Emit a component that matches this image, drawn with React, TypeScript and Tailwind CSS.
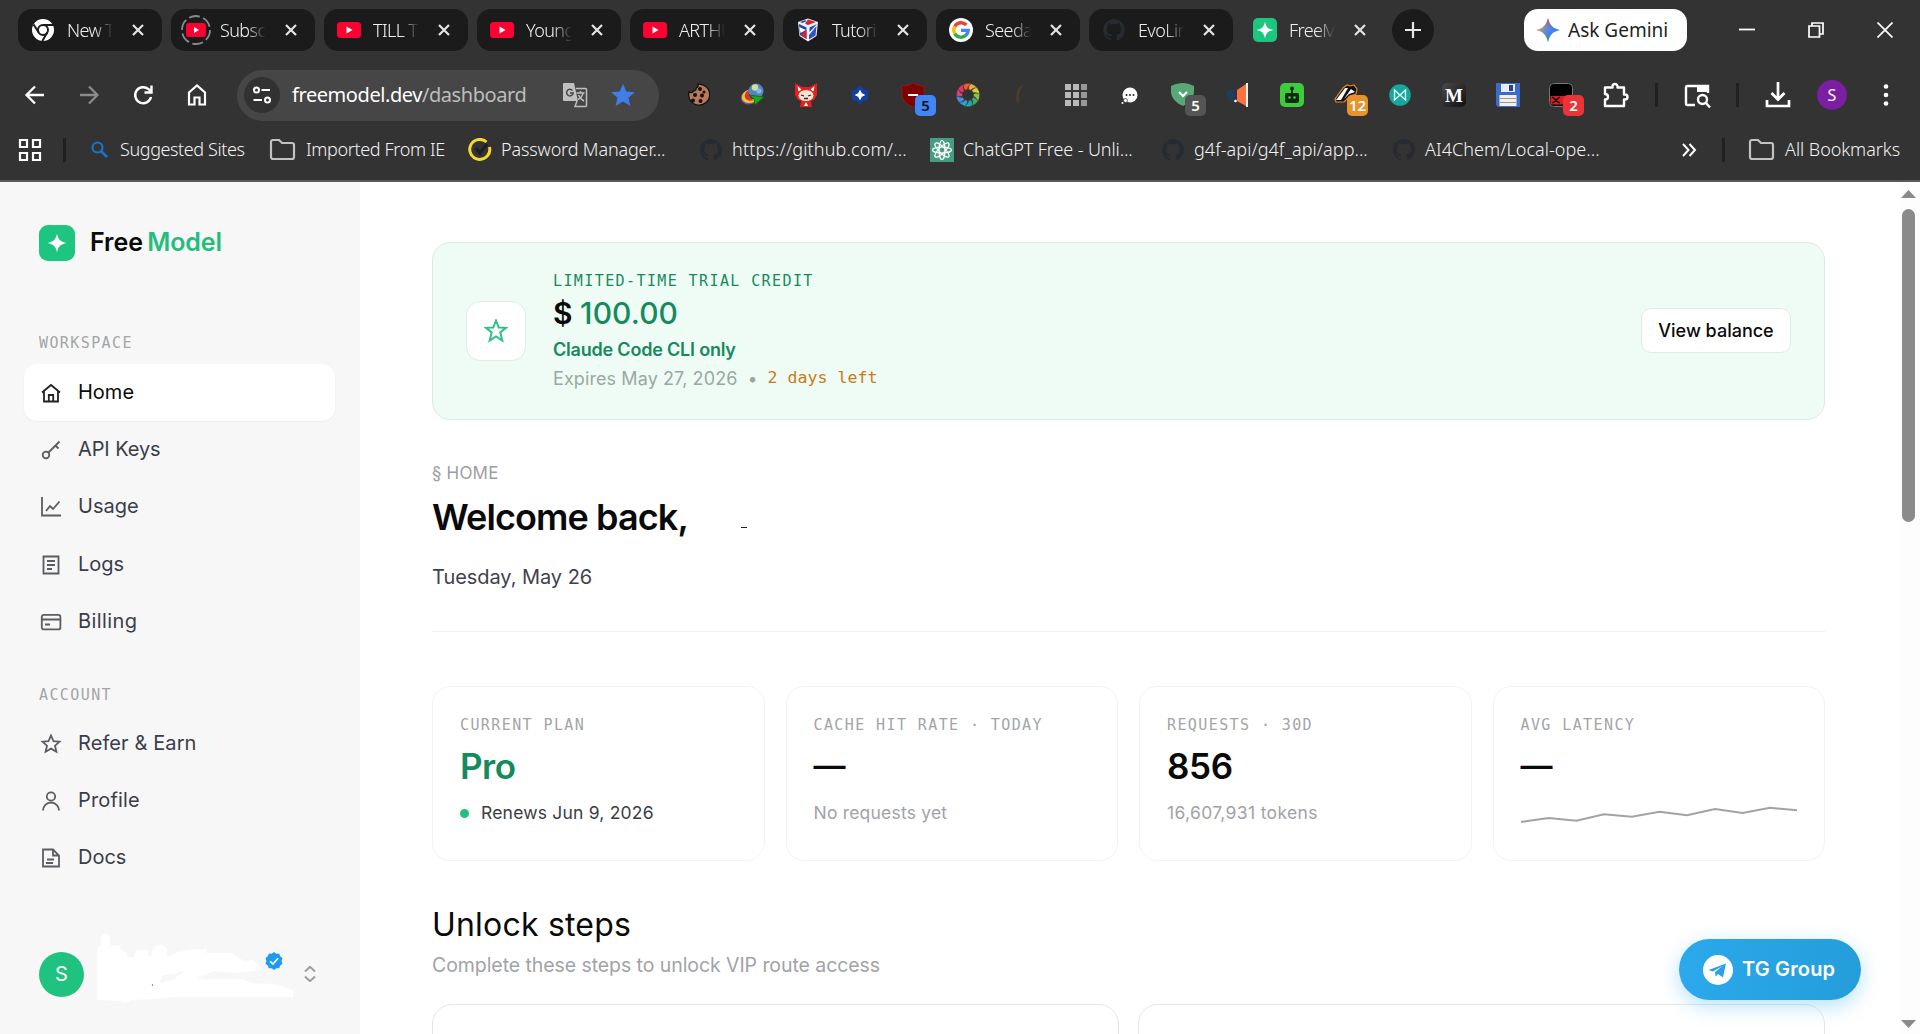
import React from "react";

type P = { children?: React.ReactNode };

const CH = "font-['Noto_Sans','Open_Sans',sans-serif]";

function Svg({ s = 24, vb = "0 0 24 24", children, className = "" }: P & { s?: number; vb?: string; className?: string }) {
  return (
    <svg width={s} height={s} viewBox={vb} fill="none" stroke="currentColor" strokeWidth={1.8} className={"shrink-0 " + className}>
      {children}
    </svg>
  );
}

const YT = () => (
  <Svg className="text-white">
    <rect x="0" y="4" width="24" height="16" rx="3.5" fill="#ff0033" stroke="none" />
    <path d="M9.5 8.5v7l6-3.5z" fill="#fff" stroke="none" />
  </Svg>
);
const YTLoading = () => (
  <Svg s={32} vb="0 0 32 32" className="-m-1 text-[#8a8a8a]">
    <circle cx="16" cy="16" r="14" strokeDasharray="11 3.6" strokeWidth="1.8" />
    <rect x="6" y="9" width="20" height="14" rx="3" fill="#ff0033" stroke="none" />
    <path d="M14 13v6l5-3z" fill="#fff" stroke="none" />
  </Svg>
);
const ChromeIcon = () => (
  <Svg className="text-[#1b1b1b]">
    <circle cx="12" cy="12" r="11" fill="#fff" stroke="none" />
    <circle cx="12" cy="12" r="5" strokeWidth="2" />
    <path d="M12 7h10M7.700 14.500L2.600 6.500M16.300 14.500l-5 8.400" strokeWidth="2" />
  </Svg>
);
const CubeIcon = () => (
  <Svg>
    <path d="M12 .5L22 4l-1.500 14L12 23.500 3.500 18 2 4z" fill="#f2f2f5" stroke="none" />
    <path d="M3 6l7.500 3.500V21L4 17z" fill="#1d46b8" stroke="none" />
    <path d="M3.300 9l6.500 3-5.300 3z" fill="#fff" stroke="none" />
    <path d="M4.500 17l6-5v9z" fill="#d8242f" stroke="none" />
    <path d="M21 6l-7.500 3.500V14z" fill="#1d46b8" stroke="none" />
    <path d="M20.500 8L13 17v4.500l6.500-4z" fill="#2b55c4" stroke="none" />
    <path d="M12 1.500l8 2.500-8 3-3-1.200z" fill="#d8242f" stroke="none" />
    <path d="M4 4l5-1.700 2 .7-4.500 2z" fill="#1d46b8" stroke="none" />
  </Svg>
);
const GoogleIcon = () => (
  <Svg>
    <circle cx="12" cy="12" r="12" fill="#fff" stroke="none" />
    <g strokeWidth="3.4">
      <path d="M17.300 7A7.200 7.200 0 0 0 5.800 8.400" stroke="#ea4335" />
      <path d="M5.800 8.400a7.200 7.200 0 0 0 0 7.200" stroke="#fbbc05" />
      <path d="M5.800 15.600a7.200 7.200 0 0 0 11.100 1.700" stroke="#34a853" />
      <path d="M16.800 17.400a7.200 7.200 0 0 0 2.400-5H12" stroke="#4285f4" />
    </g>
  </Svg>
);
const GitHub = () => (
  <Svg className="text-[#252b31]">
    <path d="M12 1a11 11 0 0 0-3.5 21.4c.6.1.8-.2.8-.5v-2c-3 .6-3.800-1.400-3.800-1.400-.5-1.300-1.200-1.600-1.200-1.600-1-.7.100-.7.100-.7 1.100.1 1.700 1.100 1.700 1.100 1 1.700 2.600 1.200 3.200.9.100-.7.400-1.200.7-1.500-2.500-.3-5-1.200-5-5.500 0-1.200.4-2.200 1.100-2.900-.1-.3-.5-1.400.1-3 0 0 1-.3 3 1.100a10.500 10.500 0 0 1 5.600 0c2.100-1.400 3-1.100 3-1.100.6 1.600.2 2.700.1 3 .7.700 1.100 1.700 1.100 2.900 0 4.300-2.600 5.200-5.100 5.500.4.300.8 1 .8 2v3.200c0 .3.200.6.800.5A11 11 0 0 0 12 1z" fill="currentColor" stroke="none" />
  </Svg>
);
const SparkTile = () => (
  <Svg>
    <rect width="24" height="24" rx="5" fill="#1dc580" stroke="none" />
    <path d="M12 3.500c1 5.500 3 7.500 8.500 8.500-5.500 1-7.500 3-8.500 8.500-1-5.500-3-7.500-8.500-8.500 5.500-1 7.500-3 8.500-8.500z" fill="#fff" stroke="none" />
  </Svg>
);
const Close = () => (
  <Svg s={14} vb="0 0 14 14" className="text-[#e4e4e4]">
    <path d="M2 2l10 10M12 2L2 12" strokeWidth="2.200" />
  </Svg>
);
const Folder = () => (
  <Svg s={27} vb="0 0 27 24" className="text-[#c2c2c2]">
    <path d="M2 4.500a2 2 0 0 1 2-2h6l3 3h10a2 2 0 0 1 2 2v12a2 2 0 0 1-2 2H4a2 2 0 0 1-2-2z" strokeWidth="2.200" />
  </Svg>
);

const tabs: { t: string; i: React.ReactNode }[] = [
  { t: "New Tab", i: <ChromeIcon /> },
  { t: "Subscriptions", i: <YTLoading /> },
  { t: "TILL THE", i: <YT /> },
  { t: "Young and", i: <YT /> },
  { t: "ARTHUR", i: <YT /> },
  { t: "Tutorials", i: <CubeIcon /> },
  { t: "Seedance", i: <GoogleIcon /> },
  { t: "EvoLink", i: <GitHub /> },
  { t: "FreeModel", i: <SparkTile /> },
];

function TabStrip() {
  return (
    <div className="flex h-[60px] items-center pl-[18px]">
      <div className="flex gap-[9px]">
        {tabs.map(({ t, i }, n) => (
          <div key={t} className={"flex h-[42px] w-[144px] items-center rounded-[14px] pl-[13px] " + (n < 8 ? "bg-[#1b1b1b]" : "-ml-[2px]")}>
            {i}
            <span className="ml-3 w-[46px] overflow-hidden whitespace-nowrap text-[18px] font-light tracking-[-0.6px] text-[#f0f0f0] [mask-image:linear-gradient(to_right,#000_60%,transparent)]">{t}</span>
            <span className="ml-[18px] flex"><Close /></span>
          </div>
        ))}
      </div>
      <div className="ml-[8px] flex size-[42px] items-center justify-center rounded-full bg-[#1b1b1b] text-[#e8e8e8]">
        <Svg s={18} vb="0 0 18 18"><path d="M9 1v16M1 9h16" strokeWidth="2.200" /></Svg>
      </div>
      <div className="ml-[90px] flex h-[42px] w-[163px] items-center rounded-[14px] bg-white pl-3 text-[#1f1f1f]">
        <svg width="24" height="24" viewBox="0 0 24 24" className="shrink-0">
          <defs>
            <linearGradient id="gem" x1="0" y1="0.300" x2="1" y2="0.600">
              <stop offset="0" stopColor="#f2b90f" /><stop offset="0.350" stopColor="#7f8fb8" /><stop offset="0.600" stopColor="#4285f4" /><stop offset="1" stopColor="#3279f9" />
            </linearGradient>
            <linearGradient id="gem2" x1="0" y1="0" x2="0" y2="1">
              <stop offset="0" stopColor="#ea4335" /><stop offset="0.400" stopColor="#ea4335" stopOpacity="0" /><stop offset="0.650" stopColor="#34a853" stopOpacity="0" /><stop offset="1" stopColor="#34a853" />
            </linearGradient>
          </defs>
          <path d="M12 0c1.500 7 5 10.500 12 12-7 1.500-10.500 5-12 12-1.500-7-5-10.500-12-12C7 10.500 10.500 7 12 0z" fill="url(#gem)" />
          <path d="M12 0c1.500 7 5 10.500 12 12-7 1.500-10.500 5-12 12-1.500-7-5-10.500-12-12C7 10.500 10.500 7 12 0z" fill="url(#gem2)" />
        </svg>
        <span className="ml-2 whitespace-nowrap text-[19px] tracking-[0px]">Ask Gemini</span>
      </div>
      <div className="ml-[52px] flex items-center gap-[53px] text-white">
        <Svg s={16} vb="0 0 16 16"><path d="M0 7.500h16" /></Svg>
        <Svg s={16} vb="0 0 16 16"><path d="M1 4h10.500v11H1zM4 4V1h11v11h-3.500" strokeWidth="1.700" /></Svg>
        <Svg s={16} vb="0 0 16 16"><path d="M.5.5l15 15M15.500.5l-15 15" strokeWidth="1.700" /></Svg>
      </div>
    </div>
  );
}

function Ext({ children, badge, color = "" }: P & { badge?: string; color?: string }) {
  return (
    <div className="relative flex h-8 w-[54px] items-center justify-center">
      {children}
      {badge && <span className={"absolute left-[28px] top-[16px] flex h-[21px] w-[21px] items-center justify-center rounded-[5px] text-[15px] font-semibold " + color}>{badge}</span>}
    </div>
  );
}

const wheel = ["#ef5a3c", "#f2a93b", "#d9cf3f", "#8bc34a", "#3fae6a", "#26a6a8", "#29a0dc", "#4a8fe0", "#d8407f", "#e8365a"];

function Toolbar() {
  return (
    <div className="flex h-[70px] items-center text-white">
      <div className="flex w-[237px] pl-2">
        <div className="flex w-[54px] justify-center"><Svg><path d="M21 12H4M12 3.500L3.500 12l8.500 8.500" strokeWidth="2.300" /></Svg></div>
        <div className="flex w-[54px] justify-center text-[#8b8b8b]"><Svg><path d="M3 12h17M12 3.500l8.500 8.500-8.500 8.500" strokeWidth="2.300" /></Svg></div>
        <div className="flex w-[54px] justify-center"><Svg><path d="M20 14a8 8 0 1 1-2.500-7.800L20 8.500M20.500 2.500v7h-7" strokeWidth="2.400" /></Svg></div>
        <div className="flex w-[54px] justify-center"><Svg><path d="M4 9.500L12 2.500l8 7v12h-5.500v-7h-5v7H4z" strokeWidth="2.200" /></Svg></div>
      </div>
      <div className="flex h-[51px] w-[422px] items-center rounded-full bg-[#464646] pl-[7px]">
        <div className="flex size-9 items-center justify-center rounded-full bg-[#323232]">
          <Svg s={20} vb="0 0 20 20"><circle cx="4.500" cy="5" r="2.500" strokeWidth="2" /><path d="M9.500 5H18M1.500 15H10" strokeWidth="2" /><circle cx="15.500" cy="15" r="2.500" strokeWidth="2" /></Svg>
        </div>
        <span className="ml-3 w-[236px] whitespace-nowrap text-[20px] tracking-[-0.430px]">freemodel.dev<span className="text-[#bdbdbd]">/dashboard</span></span>
        <Svg s={26} vb="0 0 26 26" className="ml-[34px] text-[#c0c0c0]">
          <path d="M2 1h10l4 18H2a1 1 0 0 1-1-1V2a1 1 0 0 1 1-1z" fill="currentColor" stroke="none" />
          <path d="M10.500 8.500a3.300 3.300 0 1 0 .7 2.500H8" stroke="#464646" strokeWidth="1.500" />
          <path d="M14 6.500h9.500a1 1 0 0 1 1 1v16a1 1 0 0 1-1 1H13l2-5.500M14.500 11h8M18.500 9v2M21 11c-.5 3-3 5.500-5 6.500M16.500 13c1 2.500 3 4.500 5.500 6" strokeWidth="1.500" />
        </Svg>
        <Svg s={26} vb="0 0 24 24" className="ml-[22px]"><path d="M12 1.500l3.100 7.200 7.900.7-6 5.100 1.900 7.700L12 18.100l-6.900 4.100L7 14.500 1 9.400l7.900-.7z" fill="#3f7de8" stroke="none" /></Svg>
      </div>
      <div className="ml-[12px] flex">
        <Ext><Svg><path d="M12 1.200c.6 1.500-.3 3.300-1.800 3.800.3 1.700-1 3-2.700 3-.5 1.500-3 2.300-4.500 1A10.500 10.500 0 1 0 12 1.200z" fill="#b9785a" stroke="#111" strokeWidth="1.300" /><g fill="#111" stroke="none"><circle cx="14" cy="6" r="2" /><circle cx="18" cy="9" r="1.500" /><circle cx="9" cy="12" r="2" /><circle cx="16" cy="12.500" r="2" /><circle cx="14.500" cy="18" r="2" /><circle cx="7" cy="17.500" r="2" /></g></Svg></Ext>
        <Ext><Svg><path d="M11 6C4 7 0 12 1 16c1 5 7 7 13 4l1-4C9 17 7 12 11 6z" fill="#7a4bb0" stroke="none" /><path d="M11 6C5 7 1 12 2 15.500c1 4 7 6 12 3.500l1-3C9 17 7 12 11 6z" fill="#e9c92b" stroke="none" /><path d="M11 6C7 7 4 11 5 14.500c1 3 5 4 9 2.500-5-1-6-6-3-11z" fill="#d7342a" stroke="none" /><circle cx="16" cy="8" r="7.500" fill="#4f86c4" stroke="none" /><circle cx="15" cy="4.500" r="3.200" fill="#d4dd9b" stroke="none" /><circle cx="19" cy="8" r="2.500" fill="#8fb7e2" stroke="none" /><path d="M9 12l15 2-9 8-1-6z" fill="#1fa321" stroke="#126012" strokeWidth=".7" /></Svg></Ext>
        <Ext><Svg><path d="M1 0l7 4h8l7-4v12l-3 5-3 1 1 6H6l1-6-3-1-3-5z" fill="#e3201b" stroke="none" /><path d="M3.500 3l4 3.500-3 2zM20.500 3l-4 3.500 3 2z" fill="#fff" stroke="none" /><ellipse cx="12" cy="12.500" rx="7.500" ry="5.500" fill="#fbe4d4" stroke="none" /><path d="M7 12l3 1M17 12l-3 1M10 15.500h4" stroke="#37201b" strokeWidth="1.300" /><path d="M12 19l2 4h-4z" fill="#fff" stroke="none" /></Svg></Ext>
        <Ext><Svg><path d="M12 2.500l3.500 3 4.500 1.500.5 5-1 5-4.500 1.500-3 3-3-3L4.500 17l-1-5 .5-5 4.500-1.500z" fill="#173f9c" stroke="none" /><path d="M12 7.500l1.500 3 3 1.500-3 1.500-1.500 3-1.500-3-3-1.500 3-1.500z" fill="#fff" stroke="#fff" strokeWidth="1" /></Svg></Ext>
        <Ext badge="5" color="bg-[#4285f4] text-[#10131a]"><Svg className="-translate-x-[1px]"><path d="M12 0c3 2 7 3 11 3v8c0 6-5 11-11 13C6 22 1 17 1 11V3c4 0 8-1 11-3z" fill="#7f0000" stroke="#a31b1b" strokeWidth=".7" /><path d="M7 12h10" stroke="#fff" strokeWidth="2" /></Svg></Ext>
        <Ext><Svg>{wheel.map((c, k) => <path key={c} d="M8 1A11.500 11.500 0 0 1 16 1c-3 1-4.500 3-4.500 5.500L9 7C7.500 5 7 3 8 1z" fill={c} stroke="#333" strokeWidth=".4" transform={`rotate(${k * 36} 12 12)`} />)}</Svg></Ext>
        <Ext><Svg><path d="M14 1.500C5 4 4 17 9 21c1-1-2-13 5-19.500z" fill="#4b3d28" stroke="none" /></Svg></Ext>
        <Ext><Svg>{[1, 9, 17].map((x) => [1, 9, 17].map((y) => <rect key={x + "-" + y} x={x} y={y} width="6" height="6" fill={x > 9 ? "#989898" : "#b9b9b9"} stroke="none" />))}</Svg></Ext>
        <Ext><Svg><circle cx="12" cy="12" r="7.500" fill="#fff" stroke="none" /><circle cx="7.500" cy="17.500" r="2" fill="#fff" stroke="#333" strokeWidth=".7" /><circle cx="4.500" cy="20" r="1" fill="#fff" stroke="none" /><g fill="#222" stroke="none"><circle cx="8.500" cy="12" r="1" /><circle cx="12" cy="12" r="1" /><circle cx="15.500" cy="12" r="1" /></g></Svg></Ext>
        <Ext badge="5" color="bg-[#555] text-white"><Svg className="-translate-x-[1px]"><path d="M12 0c3 0 7 1 11 3v5c0 7-5 12-11 15C5 20 0 15 0 8V3c4-2 8-3 12-3z" fill="#58a877" stroke="none" /><path d="M8 9l4 4 4-4" stroke="#fff" strokeWidth="2" /></Svg></Ext>
        <Ext><Svg><path d="M0 9c2-2 6-3 9-3v12c-2 1-4 0-5-1-3-1-4-5-4-8z" fill="#1d3d5c" stroke="none" /><path d="M11 7l9-6v22l-9-5z" fill="#ff7043" stroke="none" /><path d="M21 0v24" stroke="#eee" strokeWidth="2" /><circle cx="9.500" cy="18" r="1.300" fill="#fff" stroke="none" /></Svg></Ext>
        <Ext><Svg><rect width="24" height="24" rx="5" fill="#3ecb3c" stroke="none" /><rect x="5" y="10" width="14" height="10" rx="2" fill="#0d2b0d" stroke="none" /><circle cx="12" cy="5.500" r="2" fill="#0d2b0d" stroke="none" /><path d="M12 5v5" stroke="#0d2b0d" /><circle cx="9.500" cy="14.500" r="1.300" fill="#3ecb3c" stroke="none" /><circle cx="14.500" cy="14.500" r="1.300" fill="#3ecb3c" stroke="none" /></Svg></Ext>
        <Ext badge="12" color="bg-[#e8912d] text-white"><Svg><path d="M1 16L9 5l4-3 3 1 4-1 3 4-1 5-6 2-6 6H2z" fill="#111" stroke="#e58a2b" strokeWidth="1.200" /><path d="M2 17L11 5l3 0L7 17zM17 6l4 3-6 2-5 5z" fill="#fff" stroke="none" /></Svg></Ext>
        <Ext><Svg><circle cx="12" cy="12" r="10.800" fill="#18a79b" stroke="none" /><path d="M6.500 17V7l5.500 5 5.500-5v10L12 12z" stroke="#d8fffa" strokeWidth="1.400" /></Svg></Ext>
        <Ext><div className="flex size-6 items-center justify-center rounded-[5px] bg-gradient-to-br from-[#4a4a4a] to-[#111] font-['Liberation_Serif',serif] text-[19px] font-bold leading-none">M</div></Ext>
        <Ext><Svg><path d="M0 0h24v24H2l-2-2z" fill="#3b6cc9" stroke="none" /><rect x="5" y="1" width="14" height="8" fill="#e5ecfa" stroke="none" /><rect x="13" y="2" width="4" height="6" fill="#24468c" stroke="none" /><rect x="3.500" y="12" width="17" height="11" fill="#f3f1ec" stroke="none" /><path d="M4 15.500h16M4 19.500h16" stroke="#999" strokeWidth="1.200" /></Svg></Ext>
        <Ext badge="2" color="bg-[#ee3338] text-white"><Svg className="-translate-x-[1px]"><rect x=".5" y=".5" width="23" height="23" rx="4" fill="#000" stroke="#777" strokeWidth="1" /><path d="M1.500 13h20v8.500h-20z" fill="#d61f26" stroke="none" /><path d="M3 14l4 3 4-3M3 20l4-2 4 2" stroke="#000" strokeWidth="1.200" /></Svg></Ext>
        <Ext><Svg s={28} vb="0 0 28 28"><path d="M3 6.500h7.500v-1a2.500 2.500 0 0 1 5 0v1H22v7h1a2.500 2.500 0 0 1 0 5h-1V25H3v-6.500c4 0 4-5.500 0-5.500z" strokeWidth="2.400" strokeLinejoin="round" /></Svg></Ext>
      </div>
      <div className="ml-[12px] h-[24px] w-[3px] bg-[#202020]" />
      <Svg s={27} vb="0 0 27 27" className="ml-[26px]"><path d="M11 23H3.500A1.500 1.500 0 0 1 2 21.500v-16A1.500 1.500 0 0 1 3.500 4H24v7" strokeWidth="2.400" /><path d="M13 3.500h11.500V10H13z" fill="currentColor" stroke="none" /><circle cx="18.500" cy="17.500" r="4.500" strokeWidth="2.400" /><path d="M22 21l4 4.500" strokeWidth="2.400" /></Svg>
      <div className="ml-[25px] h-[24px] w-[3px] bg-[#202020]" />
      <Svg s={26} vb="0 0 26 26" className="ml-[26px]"><path d="M13 0v17M6.500 11l6.500 6.500 6.500-6.500M2 18v6h22v-6" strokeWidth="2.700" /></Svg>
      <div className="ml-[26px] flex size-[30px] items-center justify-center rounded-full bg-[#7b1fa2] text-[16px]">S</div>
      <Svg s={24} className="ml-[27px]"><g fill="currentColor" stroke="none"><circle cx="12" cy="3.500" r="2.300" /><circle cx="12" cy="12" r="2.300" /><circle cx="12" cy="20.500" r="2.300" /></g></Svg>
    </div>
  );
}

function Bm({ icon, label, w, track }: { icon: React.ReactNode; label: string; w: string; track: string }) {
  return (
    <div className={"flex shrink-0 items-center whitespace-nowrap " + w}>
      {icon}
      <span className={"ml-[9px] " + track}>{label}</span>
    </div>
  );
}

function Bookmarks() {
  return (
    <div className="flex h-[39px] items-center pl-[18px] text-[18px] font-light text-[#f2f2f2]">
      <Svg className="text-white"><path d="M2 2h7v7H2zM15 2h7v7h-7zM2 15h7v7H2zM15 15h7v7h-7z" strokeWidth="2.200" /></Svg>
      <div className="ml-[21px] h-[24px] w-[3px] bg-[#202020]" />
      <div className="w-[25px]" />
      <Bm w="w-[178px]" track="pl-[3px] tracking-[-0.4px]" label="Suggested Sites" icon={<Svg s={17} vb="0 0 17 17" className="text-[#1a73c8]"><circle cx="6.500" cy="6.500" r="5" strokeWidth="2.200" /><path d="M10 10l6 6" strokeWidth="2.600" /></Svg>} />
      <Bm w="w-[199px]" track="pl-px tracking-[-0.350px]" label="Imported From IE" icon={<Folder />} />
      <Bm w="w-[231px]" track="tracking-[-0.150px]" label="Password Manager..." icon={<Svg className="text-[#f7d92c]"><path d="M18.500 4a10 10 0 1 0 3 5" strokeWidth="3" /><path d="M8 10l4 5 7-9" stroke="#1e1e1e" strokeWidth="3" /></Svg>} />
      <Bm w="w-[231px]" track="tracking-[0.150px]" label="https://github.com/..." icon={<GitHub />} />
      <Bm w="w-[231px]" track="tracking-[-0.1px]" label="ChatGPT Free - Unli..." icon={<Svg><rect width="24" height="24" fill="#479d83" stroke="none" />{[0, 45, 90, 135].map((a) => <ellipse key={a} cx="12" cy="12" rx="3" ry="9.500" stroke="#fff" strokeWidth="1.200" transform={`rotate(${a} 12 12)`} />)}</Svg>} />
      <Bm w="w-[231px]" track="tracking-[0.050px]" label="g4f-api/g4f_api/app..." icon={<GitHub />} />
      <Bm w="w-[289px]" track="tracking-[0.050px]" label="AI4Chem/Local-ope..." icon={<GitHub />} />
      <Svg s={16} vb="0 0 16 16" className="text-white"><path d="M2 2l5.500 6L2 14M8.500 2L14 8l-5.500 6" strokeWidth="2" /></Svg>
      <div className="ml-[25px] h-[24px] w-[3px] bg-[#202020]" />
      <div className="w-[23px]" />
      <Bm w="w-[160px]" track="pl-px tracking-[-0.050px]" label="All Bookmarks" icon={<Folder />} />
    </div>
  );
}

const navIcons: Record<string, React.ReactNode> = {
  Home: <path d="M1 9.500L10 2l9 7.500M3 8.500V18.500h14V8.500M7.800 18.500v-6.500h4.400v6.500" />,
  "API Keys": <><circle cx="5" cy="15" r="3.300" /><path d="M7.500 12.500L18.500 1.500M14.500 5.500l3 3" /></>,
  Usage: <path d="M1 0v18.500h19M5 14l4-5 3 3 6.500-7.500" />,
  Logs: <path d="M2.500 1.500h15v17h-15zM6 6h8M6 10h8M6 14h5" />,
  Billing: <><rect x="0.800" y="2.800" width="18.600" height="14.600" rx="2" /><path d="M1 7.500h18M4 12.500h5" /></>,
  "Refer & Earn": <path d="M10 1.500l2.500 5.600 6 .6-4.500 4 1.400 6L10 14.600l-5.400 3.100 1.400-6-4.500-4 6-.6z" />,
  Profile: <><circle cx="10" cy="5.500" r="4.200" /><path d="M2 19.500a8 8 0 0 1 16 0" /></>,
  Docs: <path d="M2 1.500h10l6 6v11H2zM12 1.500v6h6M6 11.500h7M5 15h7" />,
};

function NavItem({ name, active, track = "tracking-[0px]" }: { name: string; active?: boolean; track?: string }) {
  return (
    <div className={"flex h-[57.400px] items-center rounded-[13px] pl-[17px] text-[20px] " + (active ? "bg-white text-[#0a0a0a] shadow-[0_1px_2px_rgba(0,0,0,0.05)]" : "text-[#3a3d4a]")}>
      <Svg s={20} vb="0 0 20 20" className={"overflow-visible " + (active ? "text-[#222]" : "text-[#5b5d63]")}>{navIcons[name]}</Svg>
      <span className={"-mt-[2px] ml-[17px] " + track}>{name}</span>
    </div>
  );
}

const MONO = "whitespace-pre font-['DejaVu_Sans_Mono',monospace] text-[15px] leading-5 tracking-[1.400px]";

function Sidebar() {
  return (
    <aside className="flex w-[360px] shrink-0 flex-col bg-[#f7f7f7] px-6 pt-[43px]">
      <div className="flex h-9 items-center pl-[15px]">
        <div className="flex size-9 items-center justify-center rounded-[9px] bg-[#1dc580]">
          <Svg s={20} vb="0 0 20 20"><path d="M10 .5c.9 5.500 3.500 8.500 9.500 9.500-6 1-8.600 4-9.500 9.500C9.100 14 6.500 11 .5 10 6.500 9 9.100 6 10 .5z" fill="#fff" stroke="none" /></Svg>
        </div>
        <span className="ml-[15px] whitespace-nowrap text-[25px] font-semibold tracking-[-0.050px] text-[#0a0a0a]">Free <span className="-ml-[2px] text-[#24bd7d]">Model</span></span>
      </div>
      <div className={"mt-[72px] h-5 pl-[15px] text-[#a3a5a8] " + MONO}>WORKSPACE</div>
      <nav className="mt-[11px] w-[311px]">
        <NavItem name="Home" active />
        <NavItem name="API Keys" track="tracking-[-0.100px]" />
        <NavItem name="Usage" />
        <NavItem name="Logs" />
        <NavItem name="Billing" track="tracking-[0.400px]" />
      </nav>
      <div className={"mt-[34px] h-5 pl-[15px] text-[#a3a5a8] " + MONO}>ACCOUNT</div>
      <nav className="mt-[10px] w-[311px]">
        <NavItem name="Refer & Earn" track="tracking-[0.100px]" />
        <NavItem name="Profile" track="tracking-[0.150px]" />
        <NavItem name="Docs" />
      </nav>
      <div className="mt-[51px] flex h-[72px] items-center pl-[15px]">
        <div className="flex size-[45px] shrink-0 items-center justify-center rounded-full bg-[#1fc37f] text-[20px] text-white">S</div>
        <div className="relative ml-3 h-[72px] w-[200px] shrink-0">
          <svg width="200" height="72" viewBox="96 939 200 72" className="block overflow-visible">
            <path d="M97 1001L97 951Q98 947 101 946V939C101 933 109 933 110 939V947L119 946L122 952L127 953L128 958L134 958L136 951H147L149 957L152 957C150 943 167 943 167 952V958L176 954L187 951L207 950L206 954L232 954L245 963L252 961L263 970L255 972L235 974L215 972L196 980H243L250 984L275 985L293 991V998H180L150 1000L132 1001Q127 1006 120 1002Z" fill="#fff" />
            <path d="M163 976l12-1 11-4-13 10-14 3z" fill="#f7f7f7" />
            <circle cx="152.500" cy="986" r=".7" fill="#555" />
          </svg>
          <Svg s={18} vb="0 0 18 18" className="absolute left-[169px] top-[14px]">
            <path d="M9 0l2.300 1.700 2.900-.1.900 2.700 2.400 1.700L16.600 9l.9 2.900-2.400 1.700-.9 2.700-2.900-.1L9 18l-2.300-1.800-2.900.1-.9-2.700L.5 11.900 1.400 9 .5 6l2.400-1.700.9-2.700 2.900.1z" fill="#1d9bf0" stroke="none" />
            <path d="M5.200 9.300L8 12l5-5.800" stroke="#fff" strokeWidth="1.700" />
          </Svg>
        </div>
        <Svg s={16} vb="0 0 16 16" className="ml-[6px] text-[#9b9b9b]"><path d="M3 5.500l5-4.700 5 4.700M3 10.500l5 4.700 5-4.700" strokeWidth="1.900" /></Svg>
      </div>
    </aside>
  );
}

function Stat({ label, value, green, children }: P & { label: string; value: string; green?: boolean }) {
  return (
    <div className="h-[175px] rounded-[18px] border border-[#f3f3f3] px-[27px] pt-[28px]">
      <div className={"h-5 text-[#a3a5a8] " + MONO}>{label}</div>
      <div className={"mt-[9px] h-[44px] font-semibold leading-[44px] " + (green ? "text-[35px] tracking-[-0.500px] text-[#158a5c]" : value === "—" ? "text-[32px] text-[#0a0a0a]" : "text-[35px] tracking-[-0.300px] text-[#0a0a0a]")}>{value}</div>
      <div className="mt-[13px] flex h-6 items-center whitespace-nowrap text-[17.500px] tracking-[0.200px] text-[#a0a3a8]">{children}</div>
    </div>
  );
}

function Main() {
  return (
    <main className="flex-1 overflow-hidden bg-white pl-[72px] pt-[60px]">
      <section className="flex h-[178px] w-[1393px] items-center rounded-[18px] border border-[#dfe9e3] bg-[#effcf5] pl-[33px] pr-[33px]">
        <div className="-mt-px flex size-[60px] items-center justify-center rounded-[14px] border border-[#e2ebe6] bg-white text-[#2fc08a]">
          <Svg><path d="M12 1.500l2.700 7 7.300.3-5.700 4.600 2 8.100-6.300-4-6.300 4 2-8.100L2 8.800l7.300-.3z" strokeWidth="2" /></Svg>
        </div>
        <div className="ml-[27px] flex-1 whitespace-nowrap">
          <div className={"mt-px h-5 text-[#158a5c] " + MONO}>LIMITED-TIME TRIAL CREDIT</div>
          <div className="mt-[2px] h-10 text-[30px] font-semibold leading-10 text-[#0a0a0a]">$ <span className="font-medium tracking-[0.100px] text-[#158a5c]">100.00</span></div>
          <div className="mt-[3px] h-7 text-[18px] font-semibold leading-7 tracking-[-0.200px] text-[#158a5c]">Claude Code CLI only</div>
          <div className="mt-px flex h-7 items-center text-[18px] text-[#9ba8a2]">
            <span className="tracking-[0.100px]">Expires May 27, 2026</span>
            <span className="mx-[10px]">•</span>
            <span className="font-['DejaVu_Sans_Mono',monospace] text-[16.600px] text-[#cc7a15]">2 days left</span>
          </div>
        </div>
        <div className="-mt-px flex h-[45px] w-[150px] items-center justify-center whitespace-nowrap rounded-[10px] border border-[#e2ebe6] bg-white text-[18px] font-medium text-[#0a0a0a]">View balance</div>
      </section>

      <header className="h-[212px] w-[1393px] border-b border-[#f0f0f0] pt-[41px]">
        <div className="h-6 text-[17px] leading-6 tracking-[0.200px] text-[#9c9ea2]">§ HOME</div>
        <div className="mt-[8px] flex h-[48px] items-center whitespace-pre text-[36px] font-semibold leading-[48px] tracking-[-0.900px] text-[#0a0a0a]">
          <h1>Welcome back,</h1>
          <span className="ml-[53px] mt-[20px] h-[1px] w-[6px] bg-[#222]" />
        </div>
        <div className="mt-[22px] h-7 text-[20px] leading-7 tracking-[-0.050px] text-[#3f424c]">Tuesday, May 26</div>
      </header>

      <section className="mt-[54px] grid w-[1393px] grid-cols-4 gap-[21px]">
        <Stat label="CURRENT PLAN" value="Pro" green>
          <span className="size-[9px] rounded-full bg-[#1fc37f]" />
          <span className="ml-3 text-[#3a3d45]">Renews Jun 9, 2026</span>
        </Stat>
        <Stat label="CACHE HIT RATE · TODAY" value="—">No requests yet</Stat>
        <Stat label="REQUESTS · 30D" value="856"><span className="tracking-[0.350px]">16,607,931 tokens</span></Stat>
        <Stat label="AVG LATENCY" value="—">
          <svg width="277" height="24" viewBox="0 0 277 24" className="overflow-visible">
            <polyline points="0,21 27.700,17 55.400,19.700 83,13.300 110.800,15.700 138.500,10.700 166,14.300 194,8 221.600,12 249,6.700 276,9.300" fill="none" stroke="#a3a3a6" strokeWidth="2" />
          </svg>
        </Stat>
      </section>

      <section className="mt-[40px]">
        <h2 className="h-12 text-[32px] leading-[48px] tracking-[0.200px] text-[#0a0a0a]">Unlock steps</h2>
        <p className="mt-[2px] h-7 text-[19.500px] leading-7 tracking-[-0.070px] text-[#a0a3a8]">Complete these steps to unlock VIP route access</p>
        <div className="mt-[25px] grid w-[1393px] grid-cols-2 gap-[19px]">
          <div className="h-[100px] rounded-[20px] border border-[#e6e6e6]" />
          <div className="h-[100px] rounded-[20px] border border-[#e6e6e6]" />
        </div>
      </section>
    </main>
  );
}

export default function App() {
  return (
    <div className="flex h-[1034px] w-[1920px] flex-col overflow-hidden bg-white font-['Inter',sans-serif]">
      <div className={"h-[182px] shrink-0 border-b-2 border-[#5a5a5a] bg-[#333333] " + CH}>
        <TabStrip />
        <Toolbar />
        <Bookmarks />
      </div>
      <div className="relative flex h-[852px]">
        <Sidebar />
        <Main />
        <div className="flex w-5 shrink-0 flex-col items-center bg-[#fdfdfd] pr-[3px] pt-2 text-[#8a8a8a]">
          <svg width="15" height="8" viewBox="0 0 15 8"><path d="M0 8L7.500 0 15 8z" fill="currentColor" /></svg>
          <div className="mt-[11px] h-[313px] w-[13px] rounded-full bg-[#8a8a8a]" />
          <div className="flex-1" />
          <svg width="15" height="8" viewBox="0 0 15 8" className="mb-[6px]"><path d="M0 0h15L7.500 8z" fill="currentColor" /></svg>
        </div>
        <div className="absolute right-[59px] top-[757px] flex h-[61px] w-[182px] items-center rounded-full bg-gradient-to-r from-[#2ba9ec] to-[#249dda] pl-6 text-[20px] font-semibold text-white shadow-[0_6px_20px_rgba(42,171,238,0.35)]">
          <svg width="30" height="30" viewBox="0 0 30 30" className="shrink-0">
            <circle cx="15" cy="15" r="15" fill="#fff" />
            <path d="M5.500 15L23 8.500 20 22.500l-5-3.500-2.500 2.500-.5-4.500 7.500-6L10 16.500z" fill="#28a3e4" />
          </svg>
          <span className="-mt-[2px] ml-[9px] whitespace-nowrap tracking-[0.150px]">TG Group</span>
        </div>
      </div>
    </div>
  );
}
